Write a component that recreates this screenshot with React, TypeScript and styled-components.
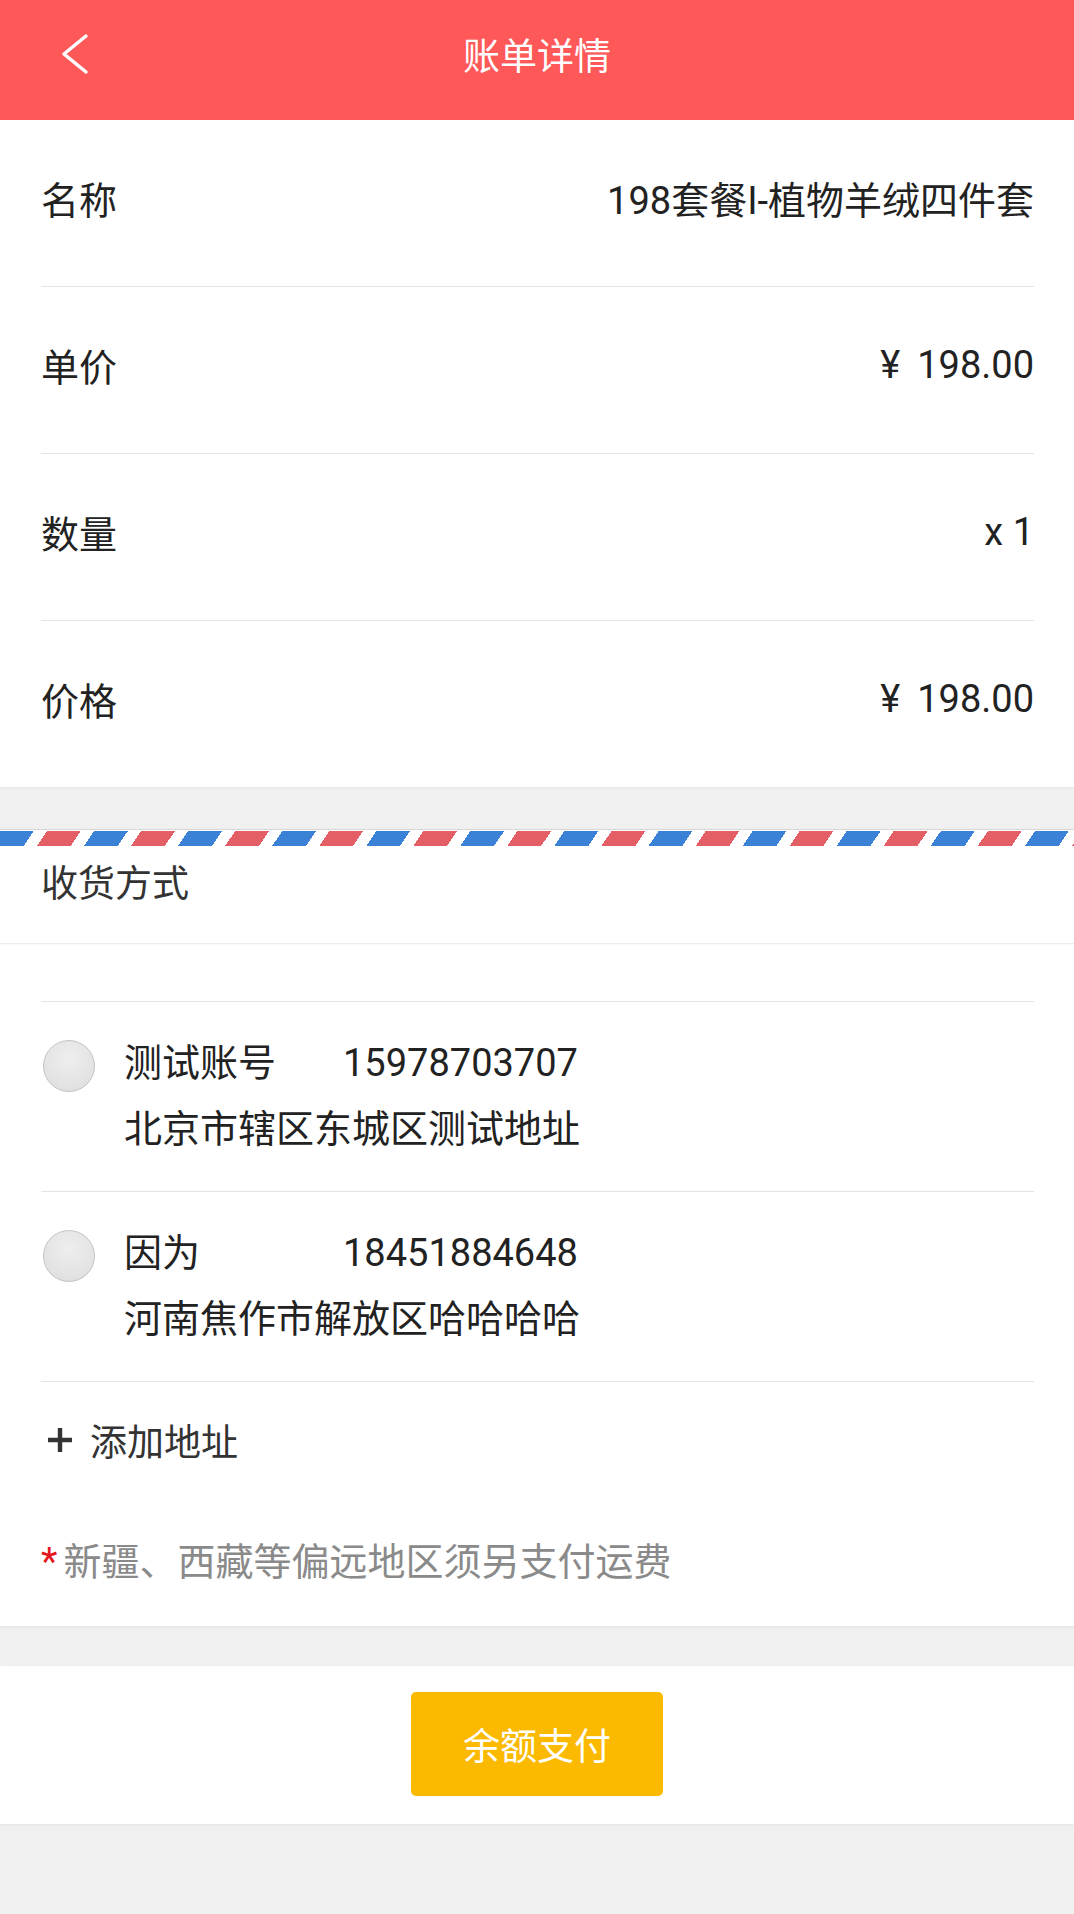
import * as React from "react";
import styled, { createGlobalStyle } from "styled-components";

const GlobalStyle = createGlobalStyle`
  html, body {
    margin: 0;
    padding: 0;
    background: #f0f0f0;
  }
  body {
    font-family: Roboto, "Noto Sans CJK SC", "Noto Sans", sans-serif;
    color: #222;
  }
`;

const Page = styled.div`
  min-height: 1914px;
  background: #f0f0f0;
`;

const Header = styled.header`
  height: 120px;
  box-sizing: border-box;
  padding-bottom: 12px;
  background: #ff5858;
  display: grid;
  grid-template-columns: 1fr auto 1fr;
  align-items: center;
`;

const BackButton = styled.button`
  justify-self: start;
  margin-left: 58px;
  padding: 0;
  border: none;
  background: transparent;
  display: flex;
  align-items: center;
`;

const Title = styled.h1`
  margin: 0;
  font-size: 37px;
  font-weight: 400;
  color: #fff;
`;

const Card = styled.section`
  background: #fff;
  box-shadow: 0 1px 3px rgba(0, 0, 0, 0.06);
`;

const InfoList = styled(Card)`
  padding: 0 40px 0 41px;
`;

const InfoRow = styled.div<{ $last?: boolean }>`
  height: 155px;
  padding-bottom: 11px;
  display: flex;
  align-items: center;
  justify-content: space-between;
  border-bottom: ${(p) => (p.$last ? "none" : "1px solid #e4e4e4")};
  font-size: 38px;
  color: #222;
`;

const Yen = styled.span`
  margin-right: 17px;
`;

const Delivery = styled(Card)`
  margin-top: 42px;
`;

const AirmailStripe = styled.div`
  height: 18px;
  border-top: 1px solid #d8d8d8;
  box-sizing: border-box;
  background: repeating-linear-gradient(
    124deg,
    #3b82d6 0 28px,
    #fff 28px 39px,
    #e45e66 39px 67px,
    #fff 67px 78px
  );
  background-size: 100% 15px;
  background-repeat: no-repeat;
  background-position: 0 1px;
`;

const SectionTitle = styled.div`
  height: 97px;
  box-sizing: border-box;
  padding-left: 41px;
  line-height: 76px;
  font-size: 37px;
  color: #333;
  border-bottom: 1px solid #ededed;
  box-shadow: 0 1px 2px rgba(0, 0, 0, 0.03);
`;

const AddressArea = styled.div`
  margin-top: 57px;
  padding: 0 40px 0 41px;
`;

const AddressItem = styled.label`
  display: flex;
  align-items: flex-start;
  gap: 29px;
  padding: 28px 0 29px;
  border-top: 1px solid #e4e4e4;
  cursor: pointer;
`;

const Radio = styled.span`
  flex: none;
  width: 50px;
  height: 50px;
  margin: 10px 0 0 2px;
  border-radius: 50%;
  border: 1px solid #c4c4c4;
  background: radial-gradient(circle at 50% 35%, #eeeeee 0%, #e2e2e2 70%, #d8d8d8 100%);
`;

const AddressText = styled.div`
  font-size: 38px;
  line-height: 66px;
  color: #222;
`;

const NameLine = styled.div`
  display: flex;
`;

const Name = styled.span`
  width: 219px;
`;

const AddRow = styled.div`
  height: 122px;
  box-sizing: border-box;
  padding: 0 0 6px 5px;
  display: flex;
  align-items: center;
  gap: 16px;
  border-top: 1px solid #e4e4e4;
  font-size: 37px;
  color: #333;
`;

const Notice = styled.div`
  height: 123px;
  box-sizing: border-box;
  padding-top: 20px;
  line-height: 78px;
  font-size: 38px;
  color: #8a8a8a;
`;

const Star = styled.span`
  color: #e5161d;
  margin-right: 6px;
`;

const Footer = styled(Card)`
  margin-top: 40px;
  height: 158px;
  display: flex;
  align-items: center;
  justify-content: center;
  padding-bottom: 2px;
  box-sizing: border-box;
`;

const PayButton = styled.button`
  width: 252px;
  height: 104px;
  border: none;
  border-radius: 5px;
  background: #fbb900;
  color: #fff;
  font-family: inherit;
  font-size: 37px;
`;

const rows: { label: string; value: string; yen?: boolean }[] = [
  { label: "名称", value: "198套餐I-植物羊绒四件套" },
  { label: "单价", value: "198.00", yen: true },
  { label: "数量", value: "x 1" },
  { label: "价格", value: "198.00", yen: true },
];

const addresses = [
  { name: "测试账号", phone: "15978703707", addr: "北京市辖区东城区测试地址" },
  { name: "因为", phone: "18451884648", addr: "河南焦作市解放区哈哈哈哈" },
];

export default function App() {
  return (
    <Page>
      <GlobalStyle />
      <Header>
        <BackButton aria-label="back">
          <svg width="32" height="44" viewBox="0 0 32 44">
            <path
              d="M28 4 L6 22 L28 40"
              fill="none"
              stroke="#fff"
              strokeWidth="3.5"
              strokeLinecap="round"
              strokeLinejoin="round"
            />
          </svg>
        </BackButton>
        <Title>账单详情</Title>
        <span />
      </Header>

      <InfoList>
        {rows.map((r, i) => (
          <InfoRow key={r.label} $last={i === rows.length - 1}>
            <span>{r.label}</span>
            <span>
              {r.yen && <Yen>¥</Yen>}
              {r.value}
            </span>
          </InfoRow>
        ))}
      </InfoList>

      <Delivery>
        <AirmailStripe />
        <SectionTitle>收货方式</SectionTitle>
        <AddressArea>
          {addresses.map((a) => (
            <AddressItem key={a.phone}>
              <Radio />
              <AddressText>
                <NameLine>
                  <Name>{a.name}</Name>
                  <span>{a.phone}</span>
                </NameLine>
                <div>{a.addr}</div>
              </AddressText>
            </AddressItem>
          ))}
          <AddRow>
            <svg width="28" height="28" viewBox="0 0 28 28">
              <path d="M14 2 V26 M2 14 H26" stroke="#333" strokeWidth="4.4" />
            </svg>
            <span>添加地址</span>
          </AddRow>
          <Notice>
            <Star>*</Star>新疆、西藏等偏远地区须另支付运费
          </Notice>
        </AddressArea>
      </Delivery>

      <Footer>
        <PayButton>余额支付</PayButton>
      </Footer>
    </Page>
  );
}
